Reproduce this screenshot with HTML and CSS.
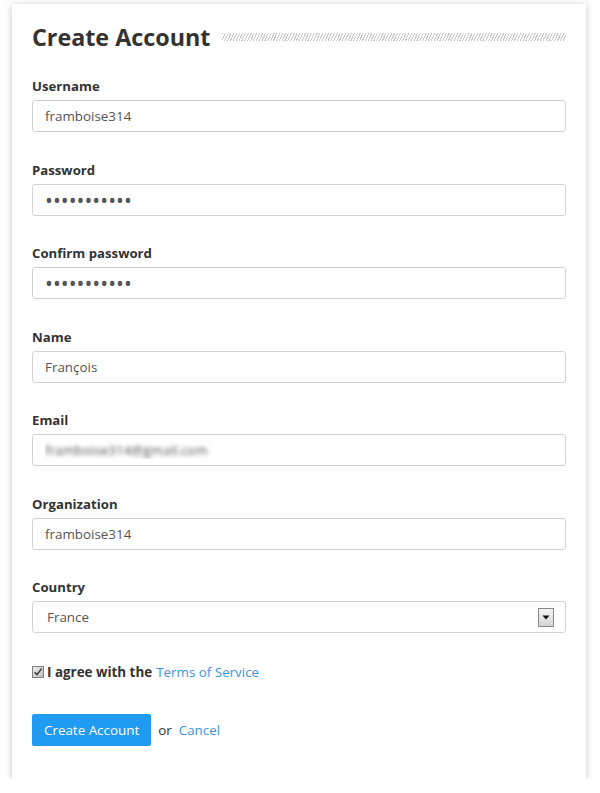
FILE: index.html
```html
<!DOCTYPE html>
<html lang="en">
<head>
<meta charset="utf-8">
<title>Create Account</title>
<link rel="stylesheet" href="styles.css">
</head>
<body>
<div class="card">
  <div class="heading">
    <h1 class="title">Create Account</h1>
    <div class="stripe"></div>
  </div>
  <form class="form">
    <div class="field">
      <label class="label">Username</label>
      <input class="input" type="text" value="framboise314">
    </div>
    <div class="field">
      <label class="label">Password</label>
      <input class="input pw" type="password" value="raspberrypi">
    </div>
    <div class="field">
      <label class="label">Confirm password</label>
      <input class="input pw" type="password" value="raspberrypi">
    </div>
    <div class="field">
      <label class="label">Name</label>
      <input class="input" type="text" value="François">
    </div>
    <div class="field">
      <label class="label">Email</label>
      <input class="input blurred" type="text" value="framboise314@gmail.com">
    </div>
    <div class="field">
      <label class="label">Organization</label>
      <input class="input" type="text" value="framboise314">
    </div>
    <div class="field">
      <label class="label">Country</label>
      <div class="select-box">
        <select class="select"><option>France</option></select>
        <span class="arrow"><svg width="8" height="5" viewBox="0 0 8 5"><path d="M0.5 0.5h7l-3.5 4z" fill="#111"/></svg></span>
      </div>
    </div>
    <div class="agree">
      <svg class="check" width="12" height="12" viewBox="0 0 12 12">
        <defs><linearGradient id="cg" x1="0" y1="0" x2="1" y2="1"><stop offset="0" stop-color="#ececec"/><stop offset="1" stop-color="#bdbdbd"/></linearGradient></defs>
        <rect x="0.5" y="0.5" width="11" height="11" fill="url(#cg)" stroke="#808080"/>
        <path d="M2.6 6.2 L5 8.6 L9.6 2.6" fill="none" stroke="#3a3a3a" stroke-width="1.5"/>
      </svg>
      <span class="agree-text">I agree with the</span>
      <a class="link" href="#">Terms of Service</a>
    </div>
    <div class="actions">
      <button class="btn" type="button">Create Account</button>
      <span class="or">or</span>
      <a class="link" href="#">Cancel</a>
    </div>
  </form>
</div>
</body>
</html>
```

FILE: styles.css
```css
html, body {
  margin: 0;
  padding: 0;
  background: #ffffff;
}
body {
  font-family: "Open Sans", "Liberation Sans", sans-serif;
  color: #333;
}
.card {
  margin: 4px 0 0 12px;
  width: 574px;
  box-sizing: border-box;
  background: #fff;
  box-shadow: 0 1px 7px rgba(0, 0, 0, 0.22);
  padding: 16px 20px 33px 20px;
}
.heading {
  display: flex;
  align-items: center;
  margin-bottom: 23px;
}
.title {
  margin: 0;
  font-size: 23.3px;
  line-height: 34px;
  font-weight: 700;
  color: #333;
  white-space: nowrap;
}
.stripe {
  flex: 1;
  height: 8px;
  margin-left: 12px;
  background: repeating-linear-gradient(115deg, #c8c8c8 0 1px, transparent 1px 2.6px);
}
.form {
  margin: 0;
}
.field {
  margin-bottom: 28.5px;
}
.label {
  display: block;
  font-size: 13.2px;
  line-height: 18px;
  font-weight: 700;
  color: #333;
  margin-bottom: 5px;
}
.input {
  display: block;
  width: 100%;
  box-sizing: border-box;
  height: 32px;
  border: 1px solid #d2d2d2;
  border-radius: 3px;
  padding: 0 12px;
  font-family: "Open Sans", "Liberation Sans", sans-serif;
  font-size: 13.4px;
  color: #555;
  background: #fff;
  margin: 0;
  outline: none;
}
.pw {
  font-size: 21px;
  letter-spacing: 0;
  color: #555;
}
.blurred {
  color: transparent;
  text-shadow: 0 0 4px rgba(70, 70, 70, 0.9);
}
.select-box {
  display: flex;
  align-items: center;
  height: 32px;
  box-sizing: border-box;
  border: 1px solid #d2d2d2;
  border-radius: 3px;
  padding: 0 11px 0 0;
  background: #fff;
}
.select {
  flex: 1;
  appearance: none;
  -webkit-appearance: none;
  border: none;
  background: transparent;
  font-family: "Open Sans", "Liberation Sans", sans-serif;
  font-size: 13.4px;
  color: #555;
  padding: 0 0 0 14px;
  height: 30px;
  outline: none;
}
.arrow {
  display: flex;
  align-items: center;
  justify-content: center;
  width: 16px;
  height: 19px;
  box-sizing: border-box;
  border: 1px solid #8a8a8a;
  background: linear-gradient(#f4f4f4, #d4d4d4);
}
.agree {
  display: flex;
  align-items: center;
  height: 20px;
  font-size: 13.4px;
  line-height: 20px;
}
.check {
  display: block;
  margin-right: 3px;
}
.agree-text {
  font-weight: 700;
  color: #333;
  margin-right: 4px;
}
.link {
  color: #3d93dd;
  text-decoration: none;
  font-size: 13.4px;
}
.actions {
  display: flex;
  align-items: center;
  gap: 7px;
  margin-top: 32px;
}
.btn {
  height: 32px;
  padding: 0 12px;
  border: none;
  border-radius: 2px;
  background: #1f9bf2;
  color: #fff;
  font-family: "Open Sans", "Liberation Sans", sans-serif;
  font-size: 13.4px;
  cursor: pointer;
}
.or {
  font-size: 13.4px;
  color: #333;
  margin-right: 0;
}
```
